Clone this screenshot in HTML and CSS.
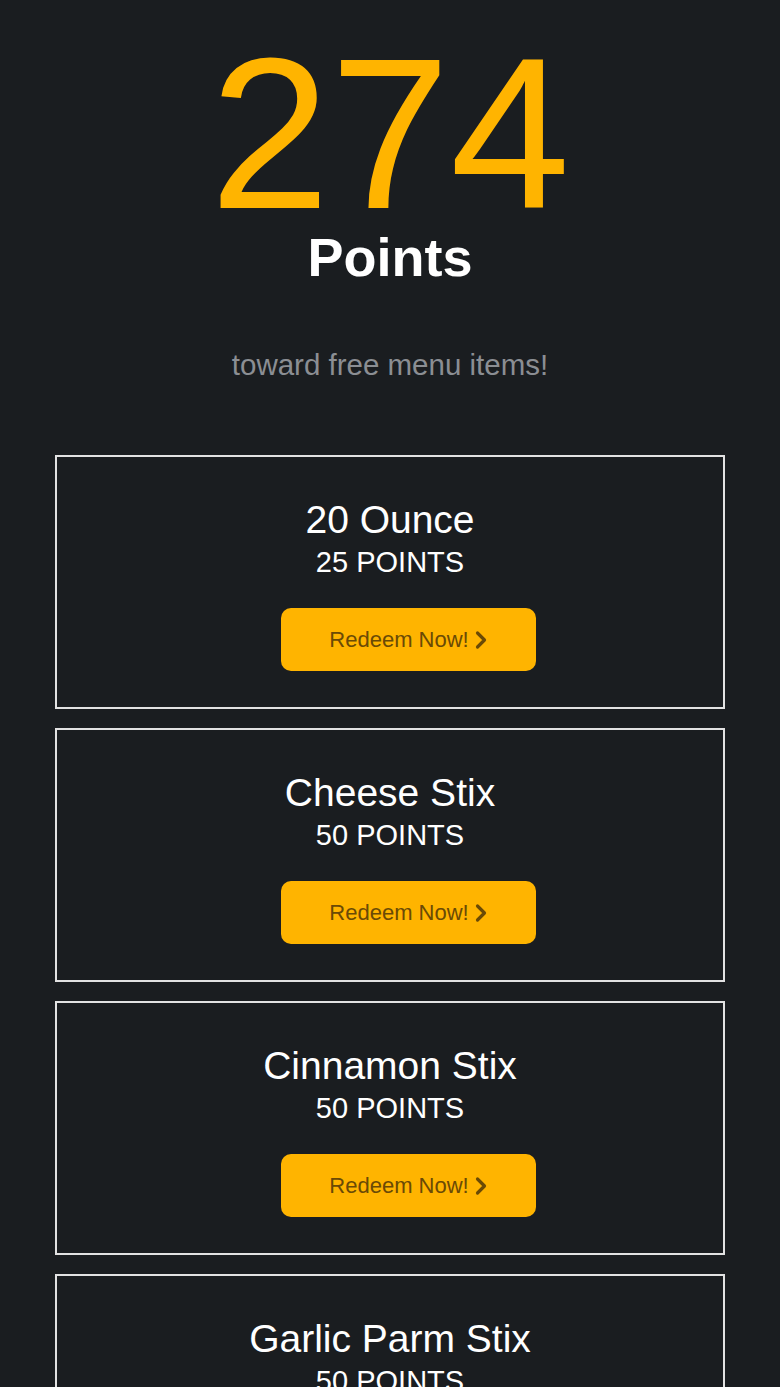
FILE: index.html
```html
<!DOCTYPE html>
<html lang="en">
<head>
    <meta charset="UTF-8">
    <meta name="viewport" content="width=device-width, initial-scale=1.0">
    <title>Rewards</title>
    <link rel="stylesheet" href="styles.css">
</head>
<body>
    <div class="balance">
        <div class="points-num">274</div>
        <div class="points-label">Points</div>
        <p class="subtitle">toward free menu items!</p>
    </div>

    <div class="rewards">
        <div class="reward-card">
            <h3 class="reward-name">20 Ounce</h3>
            <div class="reward-cost">25 POINTS</div>
            <button class="redeem-btn">Redeem Now!
                <svg class="chev" width="12" height="20" viewBox="0 0 12 20"><path d="M2.5 3 L9.5 10 L2.5 17" fill="none" stroke="currentColor" stroke-width="3.2" stroke-linecap="round" stroke-linejoin="round"/></svg>
            </button>
        </div>
        <div class="reward-card">
            <h3 class="reward-name">Cheese Stix</h3>
            <div class="reward-cost">50 POINTS</div>
            <button class="redeem-btn">Redeem Now!
                <svg class="chev" width="12" height="20" viewBox="0 0 12 20"><path d="M2.5 3 L9.5 10 L2.5 17" fill="none" stroke="currentColor" stroke-width="3.2" stroke-linecap="round" stroke-linejoin="round"/></svg>
            </button>
        </div>
        <div class="reward-card">
            <h3 class="reward-name">Cinnamon Stix</h3>
            <div class="reward-cost">50 POINTS</div>
            <button class="redeem-btn">Redeem Now!
                <svg class="chev" width="12" height="20" viewBox="0 0 12 20"><path d="M2.5 3 L9.5 10 L2.5 17" fill="none" stroke="currentColor" stroke-width="3.2" stroke-linecap="round" stroke-linejoin="round"/></svg>
            </button>
        </div>
        <div class="reward-card">
            <h3 class="reward-name">Garlic Parm Stix</h3>
            <div class="reward-cost">50 POINTS</div>
            <button class="redeem-btn">Redeem Now!
                <svg class="chev" width="12" height="20" viewBox="0 0 12 20"><path d="M2.5 3 L9.5 10 L2.5 17" fill="none" stroke="currentColor" stroke-width="3.2" stroke-linecap="round" stroke-linejoin="round"/></svg>
            </button>
        </div>
    </div>
</body>
</html>
```

FILE: styles.css
```css
body {
    margin: 0;
    background-color: #1a1d20;
    color: #fff;
    font-family: 'Liberation Sans', Arial, sans-serif;
    text-align: center;
}
.balance {
    padding-top: 38px;
}
.points-num {
    font-size: 216px;
    line-height: 0.88;
    color: #ffb400;
}
.points-label {
    font-size: 54px;
    font-weight: bold;
    line-height: 1;
    margin-top: 2px;
}
.subtitle {
    margin: 63px 0 0;
    font-size: 29.5px;
    line-height: 35px;
    color: #8b8e93;
}
.rewards {
    display: flex;
    flex-direction: column;
    gap: 19px;
    padding: 73px 55px 40px;
}
.reward-card {
    border: 2px solid #e2e2e2;
    padding: 40px 0 36px;
    display: flex;
    flex-direction: column;
    align-items: center;
}
.reward-name {
    margin: 0;
    font-size: 39px;
    font-weight: normal;
    line-height: 45px;
}
.reward-cost {
    margin-top: 4px;
    font-size: 29px;
    line-height: 33px;
}
.redeem-btn {
    margin-top: 29px;
    margin-left: 36px;
    width: 255px;
    height: 63px;
    border: none;
    border-radius: 10px;
    background-color: #ffb400;
    color: #6a4a06;
    font-family: 'Liberation Sans', Arial, sans-serif;
    font-size: 22px;
    display: flex;
    align-items: center;
    justify-content: center;
    gap: 6px;
    cursor: pointer;
}
.chev {
    display: block;
}
```
